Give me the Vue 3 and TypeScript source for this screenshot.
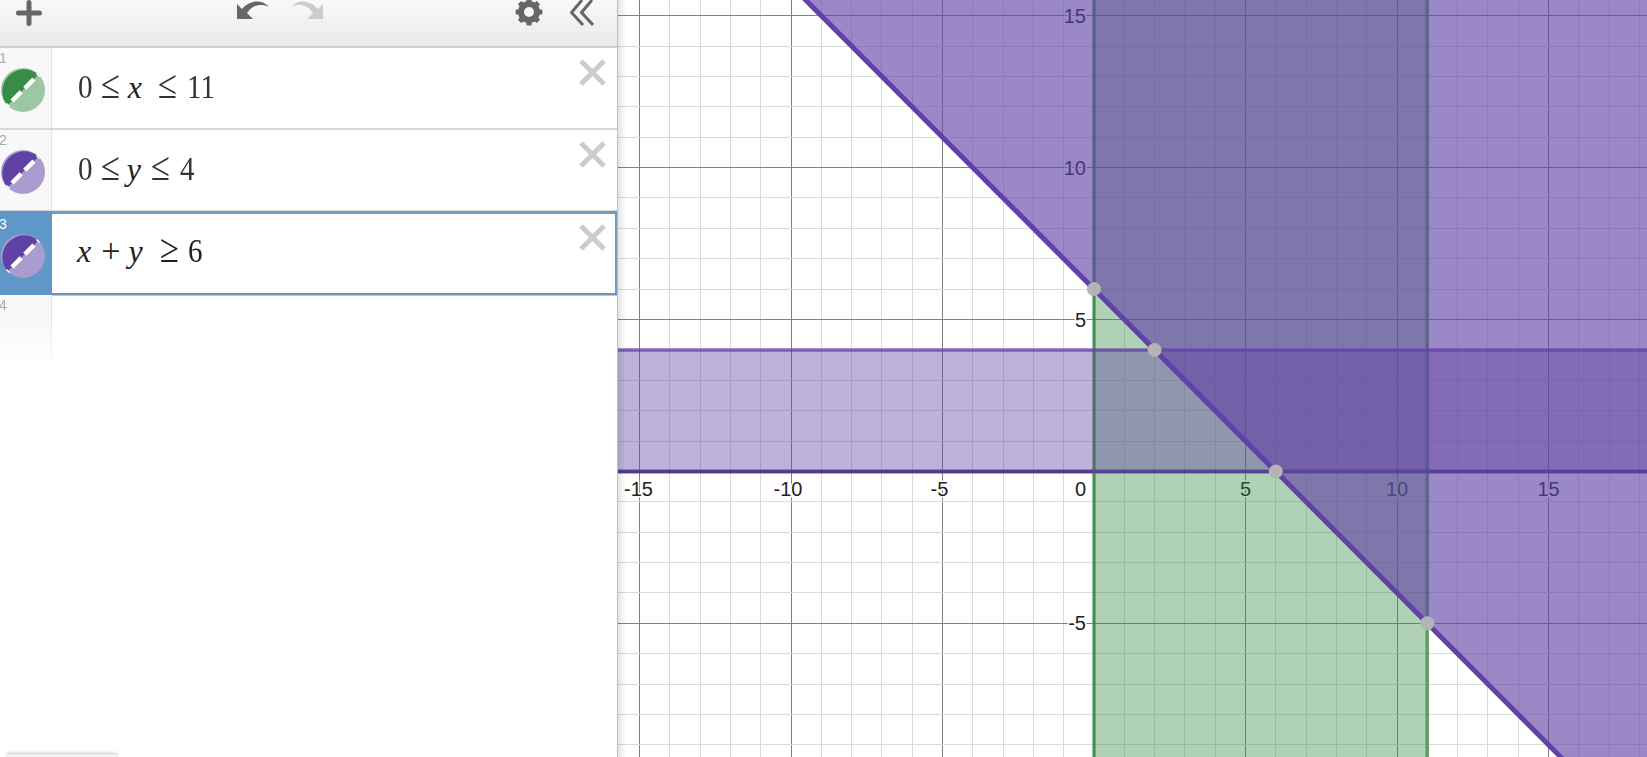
<script setup lang="ts">
interface Token { t: string; kind: 'digit' | 'rel' | 'op' | 'var'; m: number }
interface Row { id: number; color: string; light: string; tokens: Token[]; selected?: boolean }

const rows: Row[] = [
  {
    id: 1, color: '#388c46', light: '#9cc7a3',
    tokens: [
      { t: '0', kind: 'digit', m: 0 }, { t: '≤', kind: 'rel', m: 8 }, { t: 'x', kind: 'var', m: 8 },
      { t: '≤', kind: 'rel', m: 16 }, { t: '11', kind: 'digit', m: 10 },
    ],
  },
  {
    id: 2, color: '#6042a6', light: '#ab9ccf',
    tokens: [
      { t: '0', kind: 'digit', m: 0 }, { t: '≤', kind: 'rel', m: 8 }, { t: 'y', kind: 'var', m: 7 },
      { t: '≤', kind: 'rel', m: 10 }, { t: '4', kind: 'digit', m: 10 },
    ],
  },
  {
    id: 3, color: '#6042a6', light: '#ab9ccf', selected: true,
    tokens: [
      { t: 'x', kind: 'var', m: -1 }, { t: '+', kind: 'op', m: 10 }, { t: 'y', kind: 'var', m: 8 },
      { t: '≥', kind: 'rel', m: 17 }, { t: '6', kind: 'digit', m: 9 },
    ],
  },
];

// digits and relations are squeezed sideways, so give the spare advance back
const tokenStyle = (tk: Token) => {
  let trim = 0;
  if (tk.kind === 'digit') trim = 1.9 * tk.t.length;
  if (tk.kind === 'rel') trim = 2.9;
  return { marginLeft: tk.m + 'px', marginRight: -trim + 'px' };
};

// graph coordinates, in page pixels
const unitX = 30.3;
const unitY = 30.38;
const ox = 1094;
const oy = 471.4;
const left = 618;
const right = 1647;
const bottom = 757;
const sx = (v: number) => ox + v * unitX;
const sy = (v: number) => oy - v * unitY;
const snap = (p: number) => Math.round(p - 0.5) + 0.5;

const range = (a: number, b: number) => Array.from({ length: b - a + 1 }, (_, i) => a + i);
const xLines = range(-15, 18).filter((v) => v !== 0).map((v) => ({ p: snap(sx(v)), major: v % 5 === 0 }));
const yLines = range(-9, 15).filter((v) => v !== 0).map((v) => ({ p: snap(sy(v)), major: v % 5 === 0 }));

const xLabels = [
  { t: '-15', v: -15, dx: -1 }, { t: '-10', v: -10, dx: -3 }, { t: '-5', v: -5, dx: -3 },
  { t: '5', v: 5, dx: 0 }, { t: '10', v: 10, dx: 0 }, { t: '15', v: 15, dx: 0 },
];
const yLabels = [15, 10, 5, -5];

const halfPlane = `${sx(-20)},${sy(26)} ${sx(40)},${sy(-34)} ${right + 40},-40`;
const points = [[0, 6], [2, 4], [6, 0], [11, -5]].map(([x, y]) => ({ cx: sx(x), cy: sy(y) }));
const gearTeeth = range(0, 7).map((i) => i * 45);
</script>

<template>
  <div class="app">
    <aside class="sidebar">
      <header class="toolbar">
        <svg class="ic-plus" width="26" height="26" viewBox="0 0 26 26">
          <path d="M13 2.500v21M2.500 13h21" />
        </svg>
        <svg class="ic-undo" width="34" height="20" viewBox="0 0 34 20">
          <path d="M1 19V4l5 5C13 1 25-2 33 7 25 3 16 5 11 13l6 6Z" />
        </svg>
        <svg class="ic-redo" width="34" height="20" viewBox="0 0 34 20">
          <path d="M33 19V4l-5 5C21 1 9-2 1 7 9 3 18 5 23 13l-6 6Z" />
        </svg>
        <svg class="ic-gear" width="28" height="28" viewBox="-14 -14 28 28">
          <circle r="8" />
          <rect v-for="a in gearTeeth" :key="a" x="-2.600" y="-13.400" width="5.200" height="6" rx="1" :transform="`rotate(${a})`" />
        </svg>
        <svg class="ic-hide" width="24" height="27" viewBox="0 0 24 27">
          <path d="M12 0 1.500 12.500 13 25M22 0 11.500 12.500 23 25" />
        </svg>
      </header>

      <div v-for="row in rows" :key="row.id" class="row" :class="{ selected: row.selected }">
        <div class="gutter">
          <span class="num">{{ row.id }}</span>
          <svg class="swatch" width="46" height="46" viewBox="0 0 46 46">
            <circle cx="23" cy="23" r="22" :fill="row.light" />
            <path d="M7.500 38.500A22 22 0 0 1 38.500 7.500Z" :fill="row.color" />
            <path class="dash" d="M7.500 38.500 38.500 7.500" />
          </svg>
        </div>
        <div class="eq">
          <span
            v-for="(tk, i) in row.tokens"
            :key="i"
            :class="tk.kind"
            :style="tokenStyle(tk)"
          >{{ tk.t }}</span>
        </div>
        <svg class="remove" width="27" height="27" viewBox="0 0 27 27">
          <path d="M2 2 25 25M25 2 2 25" />
        </svg>
      </div>

      <div class="row-empty">
        <div class="gutter fade"><span class="num">4</span></div>
      </div>

      <div class="footer-tab"></div>
    </aside>

    <main class="graph">
      <svg class="plot" :viewBox="`${left} 0 ${right - left} ${bottom}`" width="1029" height="757">
        <g>
          <line v-for="l in xLines" :key="'x' + l.p" :x1="l.p" :x2="l.p" y1="0" :y2="bottom" :class="l.major ? 'major' : 'minor'" />
          <line v-for="l in yLines" :key="'y' + l.p" :y1="l.p" :y2="l.p" :x1="left" :x2="right" :class="l.major ? 'major' : 'minor'" />
          <line :x1="left" :x2="right" :y1="oy" :y2="oy" class="axis-x" />
          <line :x1="ox" :x2="ox" y1="0" :y2="bottom" class="axis-y" />
        </g>

        <g class="labels">
          <text v-for="l in xLabels" :key="l.t" :x="sx(l.v) + l.dx" y="495.500" text-anchor="middle">{{ l.t }}</text>
          <text v-for="v in yLabels" :key="v" x="1086" :y="sy(v) + 7" text-anchor="end">{{ v }}</text>
          <text x="1086" y="495.500" text-anchor="end">0</text>
        </g>

        <!-- 0 <= x <= 11 -->
        <rect :x="ox" y="0" :width="11 * unitX" :height="bottom" fill="#388c46" fill-opacity="0.4" />
        <line :x1="ox" :x2="ox" y1="0" :y2="bottom" class="edge green" />
        <line :x1="sx(11)" :x2="sx(11)" y1="0" :y2="bottom" class="edge green" />

        <!-- 0 <= y <= 4 -->
        <rect :x="left" :y="sy(4)" :width="right - left" :height="4 * unitY" fill="#6042a6" fill-opacity="0.41" />
        <line :x1="left" :x2="right" :y1="sy(4)" :y2="sy(4)" class="edge purple" />
        <line :x1="left" :x2="right" :y1="oy" :y2="oy" class="edge purple" />

        <!-- x + y >= 6 -->
        <polygon :points="halfPlane" fill="#6042a6" fill-opacity="0.63" />
        <line :x1="sx(-20)" :y1="sy(26)" :x2="sx(40)" :y2="sy(-34)" class="boundary" />

        <circle v-for="p in points" :key="p.cx" :cx="p.cx" :cy="p.cy" r="7" class="point" />
      </svg>
      <div class="edge-shadow"></div>
    </main>
  </div>
</template>

<style scoped>
.app {
  display: flex;
  width: 1647px;
  height: 757px;
  overflow: hidden;
  background: #fff;
  font-family: "Liberation Sans", Arial, sans-serif;
}

.sidebar {
  width: 618px;
  flex: none;
  display: flex;
  flex-direction: column;
  box-sizing: border-box;
  border-right: 1px solid #bdbdbd;
}

.toolbar {
  height: 48px;
  flex: none;
  box-sizing: border-box;
  display: flex;
  align-items: flex-start;
  border-bottom: 2px solid #cfcfcf;
  background: linear-gradient(#f9f9f9, #e9e9e9);
}
.ic-plus { margin: 0 0 0 16px; }
.ic-plus path { stroke: #666; stroke-width: 5; stroke-linecap: round; fill: none; }
.ic-undo { margin-left: 194px; }
.ic-undo path { fill: #666; }
.ic-redo { margin-left: 20px; }
.ic-redo path { fill: #ccc; }
.ic-gear { margin: -2px 0 0 191px; }
.ic-gear circle { fill: none; stroke: #666; stroke-width: 6; }
.ic-gear rect { fill: #666; }
.ic-hide { margin-left: 27px; }
.ic-hide path { fill: none; stroke: #666; stroke-width: 3; }

.row {
  height: 82px;
  flex: none;
  box-sizing: border-box;
  display: flex;
  border-bottom: 2px solid #d8d8d8;
}
.row.selected {
  height: 84px;
  margin-top: -1px;
  border-top: 3px solid #6d9cc6;
  border-right: 2px solid #6d9cc6;
  border-bottom: 2px solid #6d93b8;
  box-shadow: 0 1px 0 #b4c8da;
  position: relative;
}

.gutter {
  width: 52px;
  flex: none;
  box-sizing: border-box;
  display: flex;
  flex-direction: column;
  background: #f8f8f8;
  border-right: 1px solid #e4e4e4;
}
.selected .gutter {
  background: #5f97c9;
  border-right-color: #5f97c9;
  margin-top: -3px;
  padding-top: 3px;
  height: 84px;
}
.gutter.fade {
  height: 75px;
  -webkit-mask-image: linear-gradient(#000 30%, transparent);
  mask-image: linear-gradient(#000 30%, transparent);
}

.num {
  height: 15px;
  margin-top: 3px;
  margin-left: -1px;
  font-size: 14px;
  line-height: 15px;
  color: #aaa;
}
.selected .num { color: #fff; }

.swatch { margin-top: 1px; }
.dash {
  fill: none;
  stroke: #fff;
  stroke-width: 4.500;
  stroke-dasharray: 13 5;
  stroke-dashoffset: 11.600;
}

.eq {
  flex: 1;
  display: flex;
  align-items: baseline;
  padding: 18px 0 0 26px;
  height: 38px;
  font-family: "Liberation Serif", "Times New Roman", serif;
  color: #333;
  line-height: 38px;
}
.selected .eq { padding-top: 16px; color: #222; }
.eq span { display: inline-block; transform-origin: left center; }
.eq .digit { font-size: 33px; transform: scaleX(0.88); }
.eq .rel { font-size: 40px; transform: scaleX(0.87); }
.eq .op { font-size: 34px; }
.eq .var { font-size: 32px; font-style: italic; color: #222; }

.remove { flex: none; margin: 11px 11px 0 0; }
.remove path { stroke: #ccc; stroke-width: 5; fill: none; }
.selected .remove { margin: 10px 9px 0 0; }

.row-empty { height: 75px; flex: none; }

.footer-tab {
  margin: auto 0 0 6px;
  width: 112px;
  height: 3px;
  flex: none;
  border-radius: 4px 4px 0 0;
  background: #f2f2f2;
  border-top: 1px solid #d8d8d8;
  box-sizing: content-box;
  box-shadow: 0 -1px 3px rgba(0, 0, 0, 0.12);
}

.graph {
  position: relative;
  flex: 1;
  min-width: 0;
}
.plot { display: block; }
.minor { stroke: #dadada; stroke-width: 1; }
.major { stroke: #808080; stroke-width: 1; }
.axis-x { stroke: #222; stroke-width: 3.500; }
.axis-y { stroke: #222; stroke-width: 1; }
.labels text {
  font-family: "Liberation Sans", Arial, sans-serif;
  font-size: 20px;
  fill: #222;
  stroke: #fff;
  stroke-width: 3px;
  paint-order: stroke;
}
.edge { stroke-width: 3.500; stroke-opacity: 0.75; }
.edge.green { stroke: #388c46; }
.edge.purple { stroke: #6042a6; }
.boundary { stroke: #6042a6; stroke-width: 5; }
.point { fill: #b4b4b4; }

.edge-shadow {
  position: absolute;
  top: 0;
  left: 0;
  bottom: 0;
  width: 8px;
  background: linear-gradient(to right, rgba(0, 0, 0, 0.1), rgba(0, 0, 0, 0));
}
</style>

<style>
html, body { overflow: hidden; }
</style>
